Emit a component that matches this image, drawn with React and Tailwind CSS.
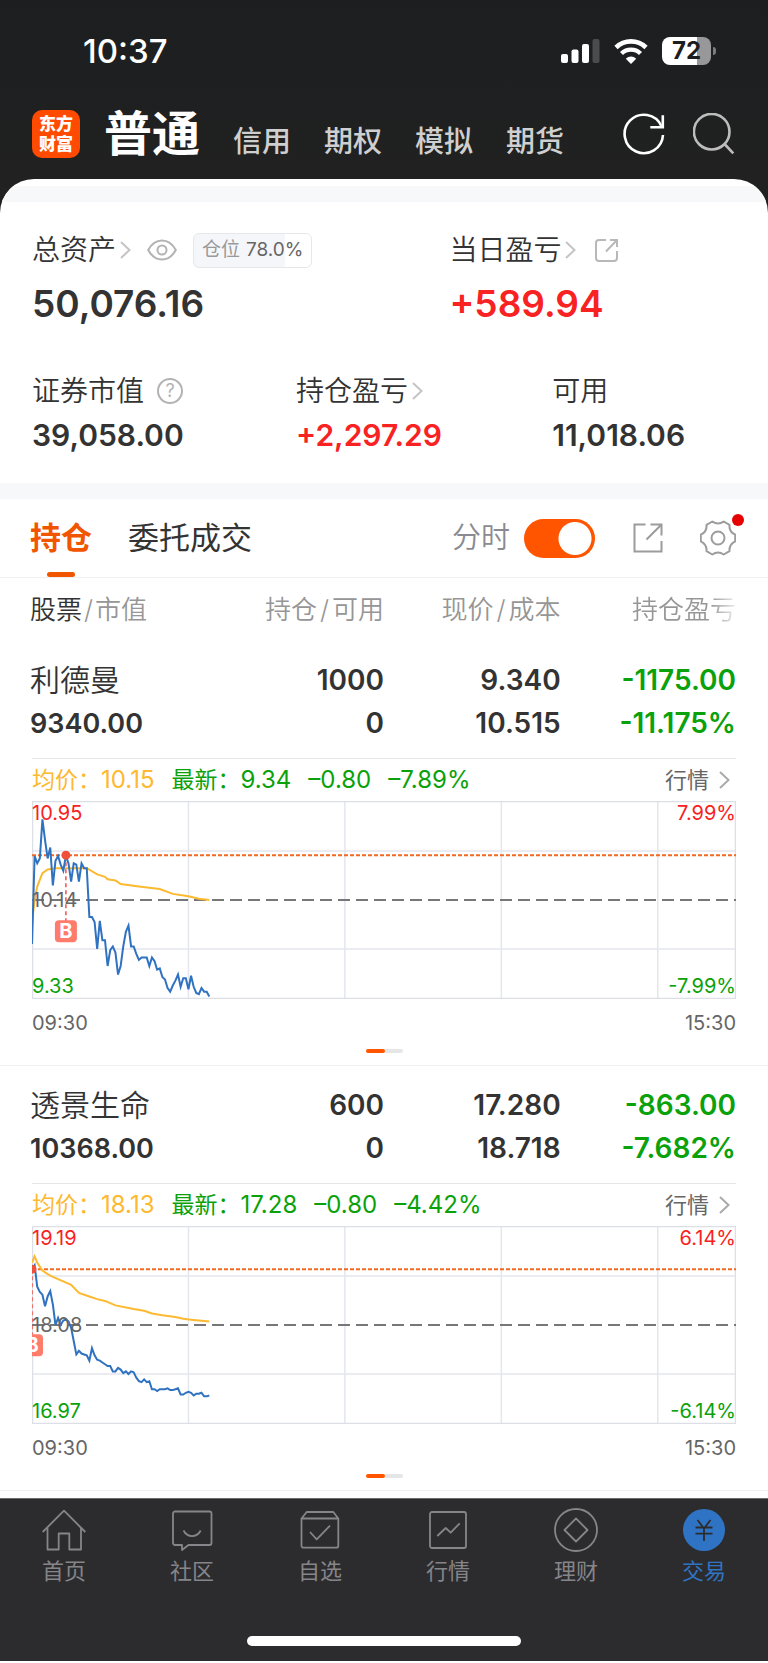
const CHART_W = 704;
const CHART_H = 198;
const MINUTES = 270;

const stocks = [
  {
    name: '利德曼',
    value: '9340.00',
    held: '1000',
    available: '0',
    price: '9.340',
    cost: '10.515',
    profit: '-1175.00',
    profitRate: '-11.175%',
    avg: '10.15',
    last: '9.34',
    change: '–0.80',
    changeRate: '–7.89%',
    high: 10.95,
    mid: 10.14,
    low: 9.33,
    range: '7.99%',
    costLine: 10.507,
    buyMinute: 13,
    prices: [
      9.78, 10.5, 10.44, 10.48, 10.8, 10.63, 10.48, 10.57, 10.26, 10.46, 10.5, 10.43, 10.38, 10.5, 10.44, 10.29,
      10.44, 10.43, 10.29, 10.44, 10.4, 10.4, 10.0, 10.0, 9.96, 9.74, 9.97, 9.81, 9.81, 9.6, 9.73, 9.76, 9.71,
      9.53, 9.6, 9.76, 9.88, 9.93, 9.76, 9.76, 9.7, 9.65, 9.67, 9.67, 9.67, 9.6, 9.67, 9.64, 9.57, 9.58, 9.51,
      9.49, 9.42, 9.39, 9.44, 9.48, 9.53, 9.43, 9.5, 9.5, 9.41, 9.52, 9.43, 9.38, 9.37, 9.42, 9.39, 9.39, 9.35,
    ],
    averages: [
      [0, 9.95], [1, 10.14], [2, 10.25], [4, 10.36], [6, 10.39], [9, 10.4], [21, 10.4], [25, 10.35], [28, 10.33],
      [29, 10.31], [32, 10.3], [34, 10.27], [41, 10.25], [49, 10.23], [54, 10.19], [60, 10.17], [64, 10.15], [68, 10.14],
    ],
  },
  {
    name: '透景生命',
    value: '10368.00',
    held: '600',
    available: '0',
    price: '17.280',
    cost: '18.718',
    profit: '-863.00',
    profitRate: '-7.682%',
    avg: '18.13',
    last: '17.28',
    change: '–0.80',
    changeRate: '–4.42%',
    high: 19.19,
    mid: 18.08,
    low: 16.97,
    range: '6.14%',
    costLine: 18.706,
    buyMinute: 0,
    prices: [
      18.7, 18.75, 18.51, 18.45, 18.42, 18.29, 18.4, 18.46, 18.31, 18.08, 18.16, 18.08, 18.13, 18.14, 18.12, 18.05,
      17.9, 17.75, 17.79, 17.76, 17.75, 17.74, 17.68, 17.82, 17.74, 17.69, 17.68, 17.66, 17.64, 17.62, 17.62, 17.56,
      17.56, 17.6, 17.58, 17.54, 17.56, 17.53, 17.56, 17.55, 17.49, 17.45, 17.44, 17.47, 17.44, 17.45, 17.36, 17.36,
      17.34, 17.36, 17.36, 17.36, 17.37, 17.35, 17.35, 17.36, 17.37, 17.3, 17.3, 17.32, 17.33, 17.32, 17.29, 17.31,
      17.31, 17.32, 17.28, 17.28, 17.29,
    ],
    averages: [
      [0, 18.78], [1, 18.85], [2, 18.78], [4, 18.69], [6, 18.65], [8, 18.62], [12, 18.57], [15, 18.53], [18, 18.44],
      [22, 18.4], [25, 18.37], [28, 18.35], [32, 18.3], [39, 18.26], [43, 18.24], [46, 18.21], [50, 18.19], [55, 18.17],
      [58, 18.15], [61, 18.14], [68, 18.12],
    ],
  },
];

function Chevron({ className }) {
  return (
    <svg className={className} width="11" height="18" viewBox="0 0 11 18" fill="none" stroke="currentColor" strokeWidth="2" aria-hidden="true">
      <path d="M1 1l8.500 8L1 17" />
    </svg>
  );
}

function StatusBar() {
  return (
    <div className="flex h-[102px] items-center justify-between pl-[83px] pr-[52px] text-white">
      <span className="text-[33px] font-medium leading-10">10:37</span>
      <div className="flex items-center gap-3.5">
        <svg width="39" height="24" viewBox="0 0 39 24" fill="currentColor" aria-hidden="true">
          <rect x="0" y="15" width="7" height="9" rx="2" />
          <rect x="10.500" y="10.500" width="7" height="13.500" rx="2" />
          <rect x="21" y="5" width="7" height="19" rx="2" />
          <rect x="31.500" y="0" width="7" height="24" rx="2" fill="#4b4c4e" />
        </svg>
        <svg width="34" height="25" viewBox="0 0 34 25" fill="none" stroke="currentColor" aria-hidden="true">
          <path d="M2 8.500a21.500 21.500 0 0 1 30 0" strokeWidth="4.600" />
          <path d="M7.500 14.500a13.700 13.700 0 0 1 19 0" strokeWidth="4.400" />
          <path d="M17 25l-5.200-5.300a7.500 7.500 0 0 1 10.400 0z" fill="currentColor" stroke="none" />
        </svg>
        <div className="flex items-center gap-0.5">
          <div className="flex h-7 w-[49px] items-center justify-center rounded-lg bg-[linear-gradient(90deg,#fff_72%,#98989b_72%)] text-2xl font-bold leading-7 text-[#1c1d1f]">
            72
          </div>
          <span className="h-2 w-[3px] rounded-r-full bg-[#7c7c7e]" />
        </div>
      </div>
    </div>
  );
}

function Header() {
  return (
    <header className="bg-gradient-to-b from-[#1c1e20] to-[#212121]">
      <StatusBar />
      <div className="flex items-end pb-[21px] pl-8 pr-[33px] pt-2">
        <div className="flex size-12 flex-col items-center justify-center rounded-[10px] bg-[#ff4a00] text-[17px] font-black leading-5 text-white">
          <span>东方</span>
          <span>财富</span>
        </div>
        <nav className="ml-6 flex items-end gap-[33px] text-[29px] font-medium leading-8 text-[#cfcfcf]">
          <a href="#normal" className="text-5xl font-bold leading-[48px] text-white">普通</a>
          <a href="#credit">信用</a>
          <a href="#option">期权</a>
          <a href="#mock">模拟</a>
          <a href="#futures">期货</a>
        </nav>
        <div className="ml-auto flex items-center gap-7 pb-[3px]">
          <button type="button" aria-label="刷新" className="text-white">
            <svg width="42" height="42" viewBox="0 0 42 42" fill="none" stroke="currentColor" strokeWidth="2.600">
              <path d="M40 22a19.200 19.200 0 1 1-1.700-9" />
              <path d="M27.300 14.300h12.500V2.300" />
            </svg>
          </button>
          <button type="button" aria-label="搜索" className="text-[#bdbdbd]">
            <svg width="42" height="42" viewBox="0 0 42 42" fill="none" stroke="currentColor" strokeWidth="2.600">
              <circle cx="18.700" cy="18.700" r="17.800" />
              <path d="M31.500 31l8.800 9.300" />
            </svg>
          </button>
        </div>
      </div>
    </header>
  );
}

function Summary() {
  return (
    <section className="px-8 pb-[30px] pt-[30px] text-[#333]">
      <div className="flex">
        <div className="w-[59.300%]">
          <div className="flex h-9 items-center">
            <span className="text-[28px] font-[350] leading-9">总资产</span>
            <Chevron className="ml-1 text-[#c4c4c4]" />
            <button type="button" aria-label="隐藏金额" className="ml-4 text-[#b3b3b3]">
              <svg width="30" height="22" viewBox="0 0 30 22" fill="none" stroke="currentColor" strokeWidth="2">
                <path d="M1.200 11C4.500 5 9.300 1.500 15 1.500S25.500 5 28.800 11C25.500 17 20.700 20.500 15 20.500S4.500 17 1.200 11z" />
                <circle cx="15" cy="11" r="4.500" />
              </svg>
            </button>
            <span className="ml-4 flex h-[35px] items-center gap-1.5 rounded-md border border-[#e6e7ea] bg-[linear-gradient(90deg,#f5f6f9_78%,#fff_78%)] px-2 text-[19px] leading-7 text-[#666]">
              <span className="text-[#999]">仓位</span>78.0%
            </span>
          </div>
          <div className="mt-3.5 text-[37px] font-semibold leading-[44px]">50,076.16</div>
        </div>
        <div>
          <div className="flex h-9 items-center">
            <span className="text-[28px] font-[350] leading-9">当日盈亏</span>
            <Chevron className="ml-1 text-[#c4c4c4]" />
            <button type="button" aria-label="分享当日盈亏" className="ml-[19px] text-[#b8b8b8]">
              <svg width="23" height="23" viewBox="0 0 23 23" fill="none" stroke="currentColor" strokeWidth="2">
                <path d="M11 1H4a3 3 0 0 0-3 3v15a3 3 0 0 0 3 3h15a3 3 0 0 0 3-3v-7" />
                <path d="M15 1h7v7M22 1L11 12.500" />
              </svg>
            </button>
          </div>
          <div className="mt-3.5 text-[37px] font-semibold leading-[44px] text-[#f82222]">+589.94</div>
        </div>
      </div>
      <div className="mt-[47px] flex">
        <div className="w-[37.500%]">
          <div className="flex h-9 items-center">
            <span className="text-[28px] font-[350] leading-9">证券市值</span>
            <button type="button" aria-label="证券市值说明" className="ml-[13px] flex size-[26px] items-center justify-center rounded-full border-2 border-[#b3b3b3] text-lg leading-5 text-[#b3b3b3]">
              ?
            </button>
          </div>
          <div className="mt-2 text-[30px] font-semibold leading-9">39,058.00</div>
        </div>
        <div className="w-[36.400%]">
          <div className="flex h-9 items-center">
            <span className="text-[28px] font-[350] leading-9">持仓盈亏</span>
            <Chevron className="ml-1 text-[#c4c4c4]" />
          </div>
          <div className="mt-2 text-[30px] font-semibold leading-9 text-[#f82222]">+2,297.29</div>
        </div>
        <div>
          <div className="text-[28px] font-[350] leading-9">可用</div>
          <div className="mt-2 text-[30px] font-semibold leading-9">11,018.06</div>
        </div>
      </div>
    </section>
  );
}

function Tabs() {
  return (
    <div className="flex h-[79px] items-center border-b border-[#f0f0f0] pl-[30px] pr-8">
      <button type="button" className="relative h-full text-[31px] font-bold text-[#f25500]">
        持仓
        <span className="absolute bottom-0 left-1/2 h-[5px] w-7 -translate-x-1/2 rounded-sm bg-[#f25500]" />
      </button>
      <button type="button" className="ml-9 h-full text-[31px] text-[#333]">委托成交</button>
      <label className="ml-auto flex items-center gap-3.5 text-[29px] font-[350] leading-9 text-[#8a8a92]">
        分时
        <input
          type="checkbox"
          defaultChecked
          className="h-[39px] w-[71px] appearance-none rounded-full bg-[#d5d5d5] bg-[radial-gradient(circle_at_20px_50%,#fff_16px,transparent_17px)] checked:bg-[#ff5500] checked:bg-[radial-gradient(circle_at_51px_50%,#fff_16px,transparent_17px)]"
        />
      </label>
      <button type="button" aria-label="分享持仓" className="ml-[38px] text-[#9c9c9c]">
        <svg width="30" height="30" viewBox="0 0 30 30" fill="none" stroke="currentColor" strokeWidth="2">
          <path d="M12.500 1.500h-11v27h27V18" />
          <path d="M17.500 1.500h11v11M28.500 1.500l-15 15" />
        </svg>
      </button>
      <button type="button" aria-label="设置" className="relative ml-[37px] text-[#9c9c9c]">
        <svg width="36" height="36" viewBox="0 0 36 36" fill="none" stroke="currentColor" strokeWidth="2" strokeLinejoin="round">
          <path d="M35.200 14.700Q28.800 11.700 29.500 4.800L23.700 1.500Q18 5.500 12.300 1.500L6.500 4.800Q7.200 11.700.8 14.700V21.300Q7.200 24.300 6.500 31.200L12.300 34.500Q18 30.500 23.700 34.500L29.500 31.200Q28.800 24.300 35.200 21.300Z" />
          <circle cx="18" cy="18" r="6.500" />
        </svg>
        <span className="absolute -right-2 -top-1.5 size-3 rounded-full bg-[#e60000]" />
      </button>
    </div>
  );
}

function MinuteChart({ stock }) {
  const x = (minute) => (minute * CHART_W) / MINUTES;
  const y = (price) => ((stock.high - price) / (stock.high - stock.low)) * CHART_H;
  const priceLine = stock.prices.map((p, i) => `${x(i)},${y(p)}`).join(' ');
  const avgLine = stock.averages.map(([m, p]) => `${x(m)},${y(p)}`).join(' ');
  const buyX = x(stock.buyMinute);
  const buyY = y(stock.costLine);

  return (
    <svg className="block w-full" viewBox={`0 0 ${CHART_W} ${CHART_H}`} fontSize="20" role="img" aria-label={`${stock.name}分时图`}>
      <g stroke="#e3e6ee" strokeWidth="1.500">
        {[60, 120, 180, 240].map((m) => (
          <line key={m} x1={x(m)} x2={x(m)} y1="0" y2={CHART_H} />
        ))}
        <line x1="0" x2={CHART_W} y1="50" y2="50" />
        <line x1="0" x2={CHART_W} y1="148" y2="148" />
        <rect x="0.500" y="0.500" width={CHART_W - 1} height={CHART_H - 1} fill="none" stroke="#dcdfe6" />
      </g>
      <line x1="0" x2={CHART_W} y1="99" y2="99" stroke="#777" strokeWidth="2" strokeDasharray="12 6" />
      <line x1="0" x2={CHART_W} y1={buyY} y2={buyY} stroke="#f26a22" strokeWidth="2" strokeDasharray="4 2" />
      <polyline points={avgLine} fill="none" stroke="#fdb930" strokeWidth="2" />
      <polyline points={priceLine} fill="none" stroke="#2f72c0" strokeWidth="2" />
      <line x1={buyX} x2={buyX} y1={buyY} y2={buyY + 66} stroke="#f0504a" strokeWidth="1.500" strokeDasharray="4 3" />
      <circle cx={buyX} cy={buyY} r="4.500" fill="#f0503a" />
      <rect x={buyX - 11} y={buyY + 65} width="22" height="22" rx="4" fill="#ff7b6b" />
      <text x={buyX} y={buyY + 83} textAnchor="middle" fontWeight="700" fill="#fff">B</text>
      <text x="0" y="19" fill="#f82222">{stock.high}</text>
      <text x="0" y="106" fill="#666">{stock.mid}</text>
      <text x="0" y="192" fill="#0aa10a">{stock.low}</text>
      <text x={CHART_W} y="19" textAnchor="end" fill="#f82222">{stock.range}</text>
      <text x={CHART_W} y="192" textAnchor="end" fill="#0aa10a">-{stock.range}</text>
    </svg>
  );
}

function StockRows({ stock }) {
  return (
    <tbody className="border-b border-[#f0f0f0]">
      <tr className="text-[28px] font-semibold leading-[43px]">
        <td className="pb-[13px] pl-[30px] pt-[18px]">
          <div className="text-[30px] font-[350]">{stock.name}</div>
          <div className="text-[27px]">{stock.value}</div>
        </td>
        <td className="pb-[13px] pt-[18px] text-right">
          <div>{stock.held}</div>
          <div>{stock.available}</div>
        </td>
        <td className="pb-[13px] pt-[18px] text-right">
          <div>{stock.price}</div>
          <div>{stock.cost}</div>
        </td>
        <td className="pb-[13px] pr-8 pt-[18px] text-right text-[#0aa10a]">
          <div>{stock.profit}</div>
          <div>{stock.profitRate}</div>
        </td>
      </tr>
      <tr>
        <td colSpan={4} className="px-8">
          <div className="flex h-[43px] items-center gap-[17px] border-t border-[#e6e6e6] text-2xl leading-8 text-[#0aa10a]">
            <span className="text-[#fdb930]"><span className="text-[23px]">均价：</span>{stock.avg}</span>
            <span><span className="text-[23px]">最新：</span>{stock.last}</span>
            <span>{stock.change}</span>
            <span>{stock.changeRate}</span>
            <a href="#quote" className="ml-auto flex items-center gap-2.5 pr-1.5 text-[22px] text-[#666]">
              行情
              <Chevron className="text-[#aaa]" />
            </a>
          </div>
          <MinuteChart stock={stock} />
          <div className="mt-2.5 flex justify-between text-xl leading-7 text-[#666]">
            <span>09:30</span>
            <span>15:30</span>
          </div>
          <div className="flex justify-center pb-3 pt-3">
            <span className="h-1 w-[19px] rounded-full bg-[#ff5500]" />
            <span className="h-1 w-[18px] rounded-r-full bg-[#e6e6e6]" />
          </div>
        </td>
      </tr>
    </tbody>
  );
}

function Holdings() {
  return (
    <table className="w-full table-fixed border-collapse text-[#333]">
      <thead>
        <tr className="h-[63px] text-[26px] leading-9 text-[#969696]">
          <th className="w-[27%] pl-[30px] text-left font-[350]">
            <span className="text-[#333]">股票</span>
            <span className="px-0.5">/</span>市值
          </th>
          <th className="w-[23%] text-right font-[350]">
            持仓<span className="px-[3px]">/</span>可用
          </th>
          <th className="w-[23%] text-right font-[350]">
            现价<span className="px-[3px]">/</span>成本
          </th>
          <th className="w-[27%] pr-8 text-right font-[350]">
            <span className="bg-gradient-to-r from-[#969696] from-75% to-[#eee] bg-clip-text text-transparent">持仓盈亏</span>
          </th>
        </tr>
      </thead>
      {stocks.map((stock) => (
        <StockRows key={stock.name} stock={stock} />
      ))}
    </table>
  );
}

const navItems = [
  {
    label: '首页',
    icon: (
      <>
        <path d="M.7 24L22 2.700 43.300 24" />
        <path d="M5.500 20v21.500h11.200v-16h10.600v16H39V20" />
      </>
    ),
  },
  {
    label: '社区',
    icon: (
      <>
        <path d="M5 3.500h34.500a2 2 0 0 1 2 2V35a2 2 0 0 1-2 2h-21L12 42v-5H5a2 2 0 0 1-2-2V5.500a2 2 0 0 1 2-2z" />
        <path d="M13.500 22.500c4 7.500 13.200 7.500 17.200 0" />
      </>
    ),
  },
  {
    label: '自选',
    icon: (
      <>
        <path d="M3.500 10.500h36.800v27.200a2 2 0 0 1-2 2H5.500a2 2 0 0 1-2-2zL8.700 4h26.600l5 6.500" />
        <path d="M12 24l6.700 7.300L32 17.700" />
      </>
    ),
  },
  {
    label: '行情',
    icon: (
      <>
        <rect x="4" y="4" width="36" height="36" rx="2" />
        <path d="M11.300 28l8.400-8 5 4.700 9-9.400" />
      </>
    ),
  },
  {
    label: '理财',
    icon: (
      <>
        <circle cx="22" cy="22" r="21" />
        <path d="M22 10.500L33.500 22 22 33.500 10.500 22z" />
      </>
    ),
  },
  {
    label: '交易',
    active: true,
    icon: (
      <>
        <circle cx="22" cy="22" r="21" fill="currentColor" stroke="none" />
        <path d="M15.500 12L22 20.500 28.500 12M22 20.500V33M13.500 19.500h17M13.500 25.700h17" stroke="#2c2c2e" />
      </>
    ),
  },
];

function BottomNav() {
  return (
    <footer className="border-b-2 border-t border-b-white border-t-[#6e6e70] bg-[#2c2c2e] pb-[15px] pt-[9px]">
      <nav className="grid grid-cols-6">
        {navItems.map((item) => (
          <a
            key={item.label}
            href="#nav"
            className={`flex flex-col items-center text-[22px] leading-7 ${item.active ? 'text-[#2f74c4]' : 'text-[#85858a]'}`}
          >
            <svg className="mb-[5px]" width="44" height="44" viewBox="0 0 44 44" fill="none" stroke="currentColor" strokeWidth="1.800" strokeLinejoin="round" aria-hidden="true">
              {item.icon}
            </svg>
            {item.label}
          </a>
        ))}
      </nav>
      <div className="mx-auto mt-[51px] h-2.5 w-[274px] rounded-full bg-white" />
    </footer>
  );
}

export default function App() {
  return (
    <div className="bg-[#212121] font-['Inter','Noto_Sans_CJK_SC',sans-serif]">
      <Header />
      <main className="overflow-hidden rounded-t-[34px] bg-white pb-[7px] pt-[7px]">
        <div className="h-4 bg-[#f6f8fa]" />
        <Summary />
        <div className="h-4 bg-[#f6f8fa]" />
        <Tabs />
        <Holdings />
      </main>
      <BottomNav />
    </div>
  );
}
